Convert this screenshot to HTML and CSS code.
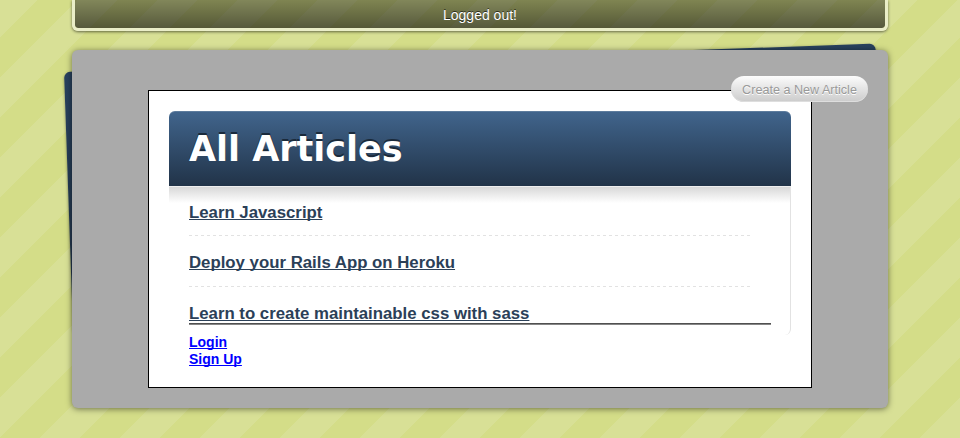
FILE: index.html
```html
<!DOCTYPE html>
<html lang="en">
<head>
<meta charset="utf-8">
<title>All Articles</title>
<link rel="stylesheet" href="styles.css">
</head>
<body>
<div class="flash">Logged out!</div>
<div class="page">
  <main class="sheet">
    <a class="button" href="#">Create a New Article</a>
    <div class="content">
      <h1 class="title">All Articles</h1>
      <section class="articles">
        <ul class="list">
          <li class="item"><a href="#">Learn Javascript</a></li>
          <li class="item"><a href="#">Deploy your Rails App on Heroku</a></li>
          <li class="item"><a href="#">Learn to create maintainable css with sass</a></li>
        </ul>
        <hr class="rule">
      </section>
      <nav class="session">
        <a href="#">Login</a>
        <a href="#">Sign Up</a>
      </nav>
    </div>
  </main>
</div>
</body>
</html>
```
FILE: styles.css
```css
* { box-sizing: border-box; }

html { height: 100%; overflow: hidden; }

body {
  margin: 0;
  min-height: 100%;
  font-family: "Liberation Sans", Arial, sans-serif;
  font-size: 14px;
  background: #d4dd88 linear-gradient(135deg, #d8e096 25%, #d4dd88 25%, #d4dd88 50%, #d8e096 50%, #d8e096 75%, #d4dd88 75%) -2px 0 / 80px 80px;
}

a { text-decoration-skip-ink: none; }

.flash {
  width: 816px;
  height: 31px;
  margin: 0 auto;
  border: 3px solid #eaeec8;
  border-top: 0;
  border-radius: 0 0 6px 6px;
  background: linear-gradient(rgba(0, 0, 0, .4), rgba(0, 0, 0, .6)) padding-box;
  box-shadow: 0 1px 3px rgba(0, 0, 0, .55);
  color: #fff;
  text-align: center;
  line-height: 30px;
  text-shadow: 0 -1px 0 rgba(0, 0, 0, .6);
}

.page {
  position: relative;
  z-index: 0;
  width: 816px;
  margin: 19px auto 0;
}

/* tilted sheet peeking out behind the page */
.page::before {
  content: "";
  position: absolute;
  z-index: -1;
  left: -8px;
  top: 22px;
  width: 812px;
  height: 262px;
  border-radius: 6px;
  background: linear-gradient(#28415d, #213348);
  box-shadow: 0 1px 3px rgba(0, 0, 0, .4);
  transform: rotate(-2deg);
  transform-origin: 0 0;
}

.sheet {
  position: relative;
  height: 358px;
  padding: 40px 76px 20px;
  border-radius: 6px;
  background: #aaa;
  box-shadow: 0 1px 6px rgba(0, 0, 0, .5);
}

.button {
  position: absolute;
  right: 20px;
  top: 26px;
  width: 137px;
  height: 26px;
  border-radius: 13px;
  background: linear-gradient(#fcfcfc, #cbcbcb);
  box-shadow: inset 0 -1px 0 #dedede;
  color: #999;
  font-size: 12.6px;
  line-height: 28px;
  text-align: center;
  text-decoration: none;
  text-shadow: 0 1px 0 #fff;
}

.content {
  height: 298px;
  padding: 20px;
  border: 1px solid #000;
  background: #fff;
}

.title {
  height: 75px;
  margin: 0;
  padding-left: 20px;
  border-radius: 6px 6px 0 0;
  background: linear-gradient(#41658d, #213348);
  box-shadow: inset 0 1px 0 rgba(255, 255, 255, .15);
  color: #fff;
  font: bold 35px/77px "DejaVu Sans", sans-serif;
  text-shadow: 0 -2px 0 #1a2a3b;
}

.articles {
  height: 149px;
  padding: 0 19px 0 20px;
  border-top: 1px solid #eee;
  border-right: 1px solid #e2e2e2;
  border-bottom-right-radius: 6px;
  background: linear-gradient(#d8d8d8, #fff) no-repeat 0 0 / 100% 16px;
}

.list {
  width: 561px;
  margin: 0;
  padding: 0;
  list-style: none;
}

.item {
  height: 51px;
  padding-top: 17px;
  font-size: 16.8px;
  font-weight: bold;
  line-height: 20px;
}

.item:first-child {
  height: 49px;
  padding-top: 16px;
}

.item:not(:last-child) {
  background: repeating-linear-gradient(90deg, #e2e2e2 0 3px, transparent 3px 6px) no-repeat 0 100% / 100% 1px;
}

.item:last-child { height: 36px; }

.item a { color: #2b4058; }

.rule {
  height: 2px;
  margin: 0;
  border: 0;
  border-top: 1px solid #505050;
  border-bottom: 1px solid #868686;
}

.session {
  display: flex;
  flex-direction: column;
  align-items: flex-start;
  margin-top: -1px;
  padding-left: 20px;
  font-weight: bold;
  line-height: 17px;
}

.session a { color: #00f; }
```
